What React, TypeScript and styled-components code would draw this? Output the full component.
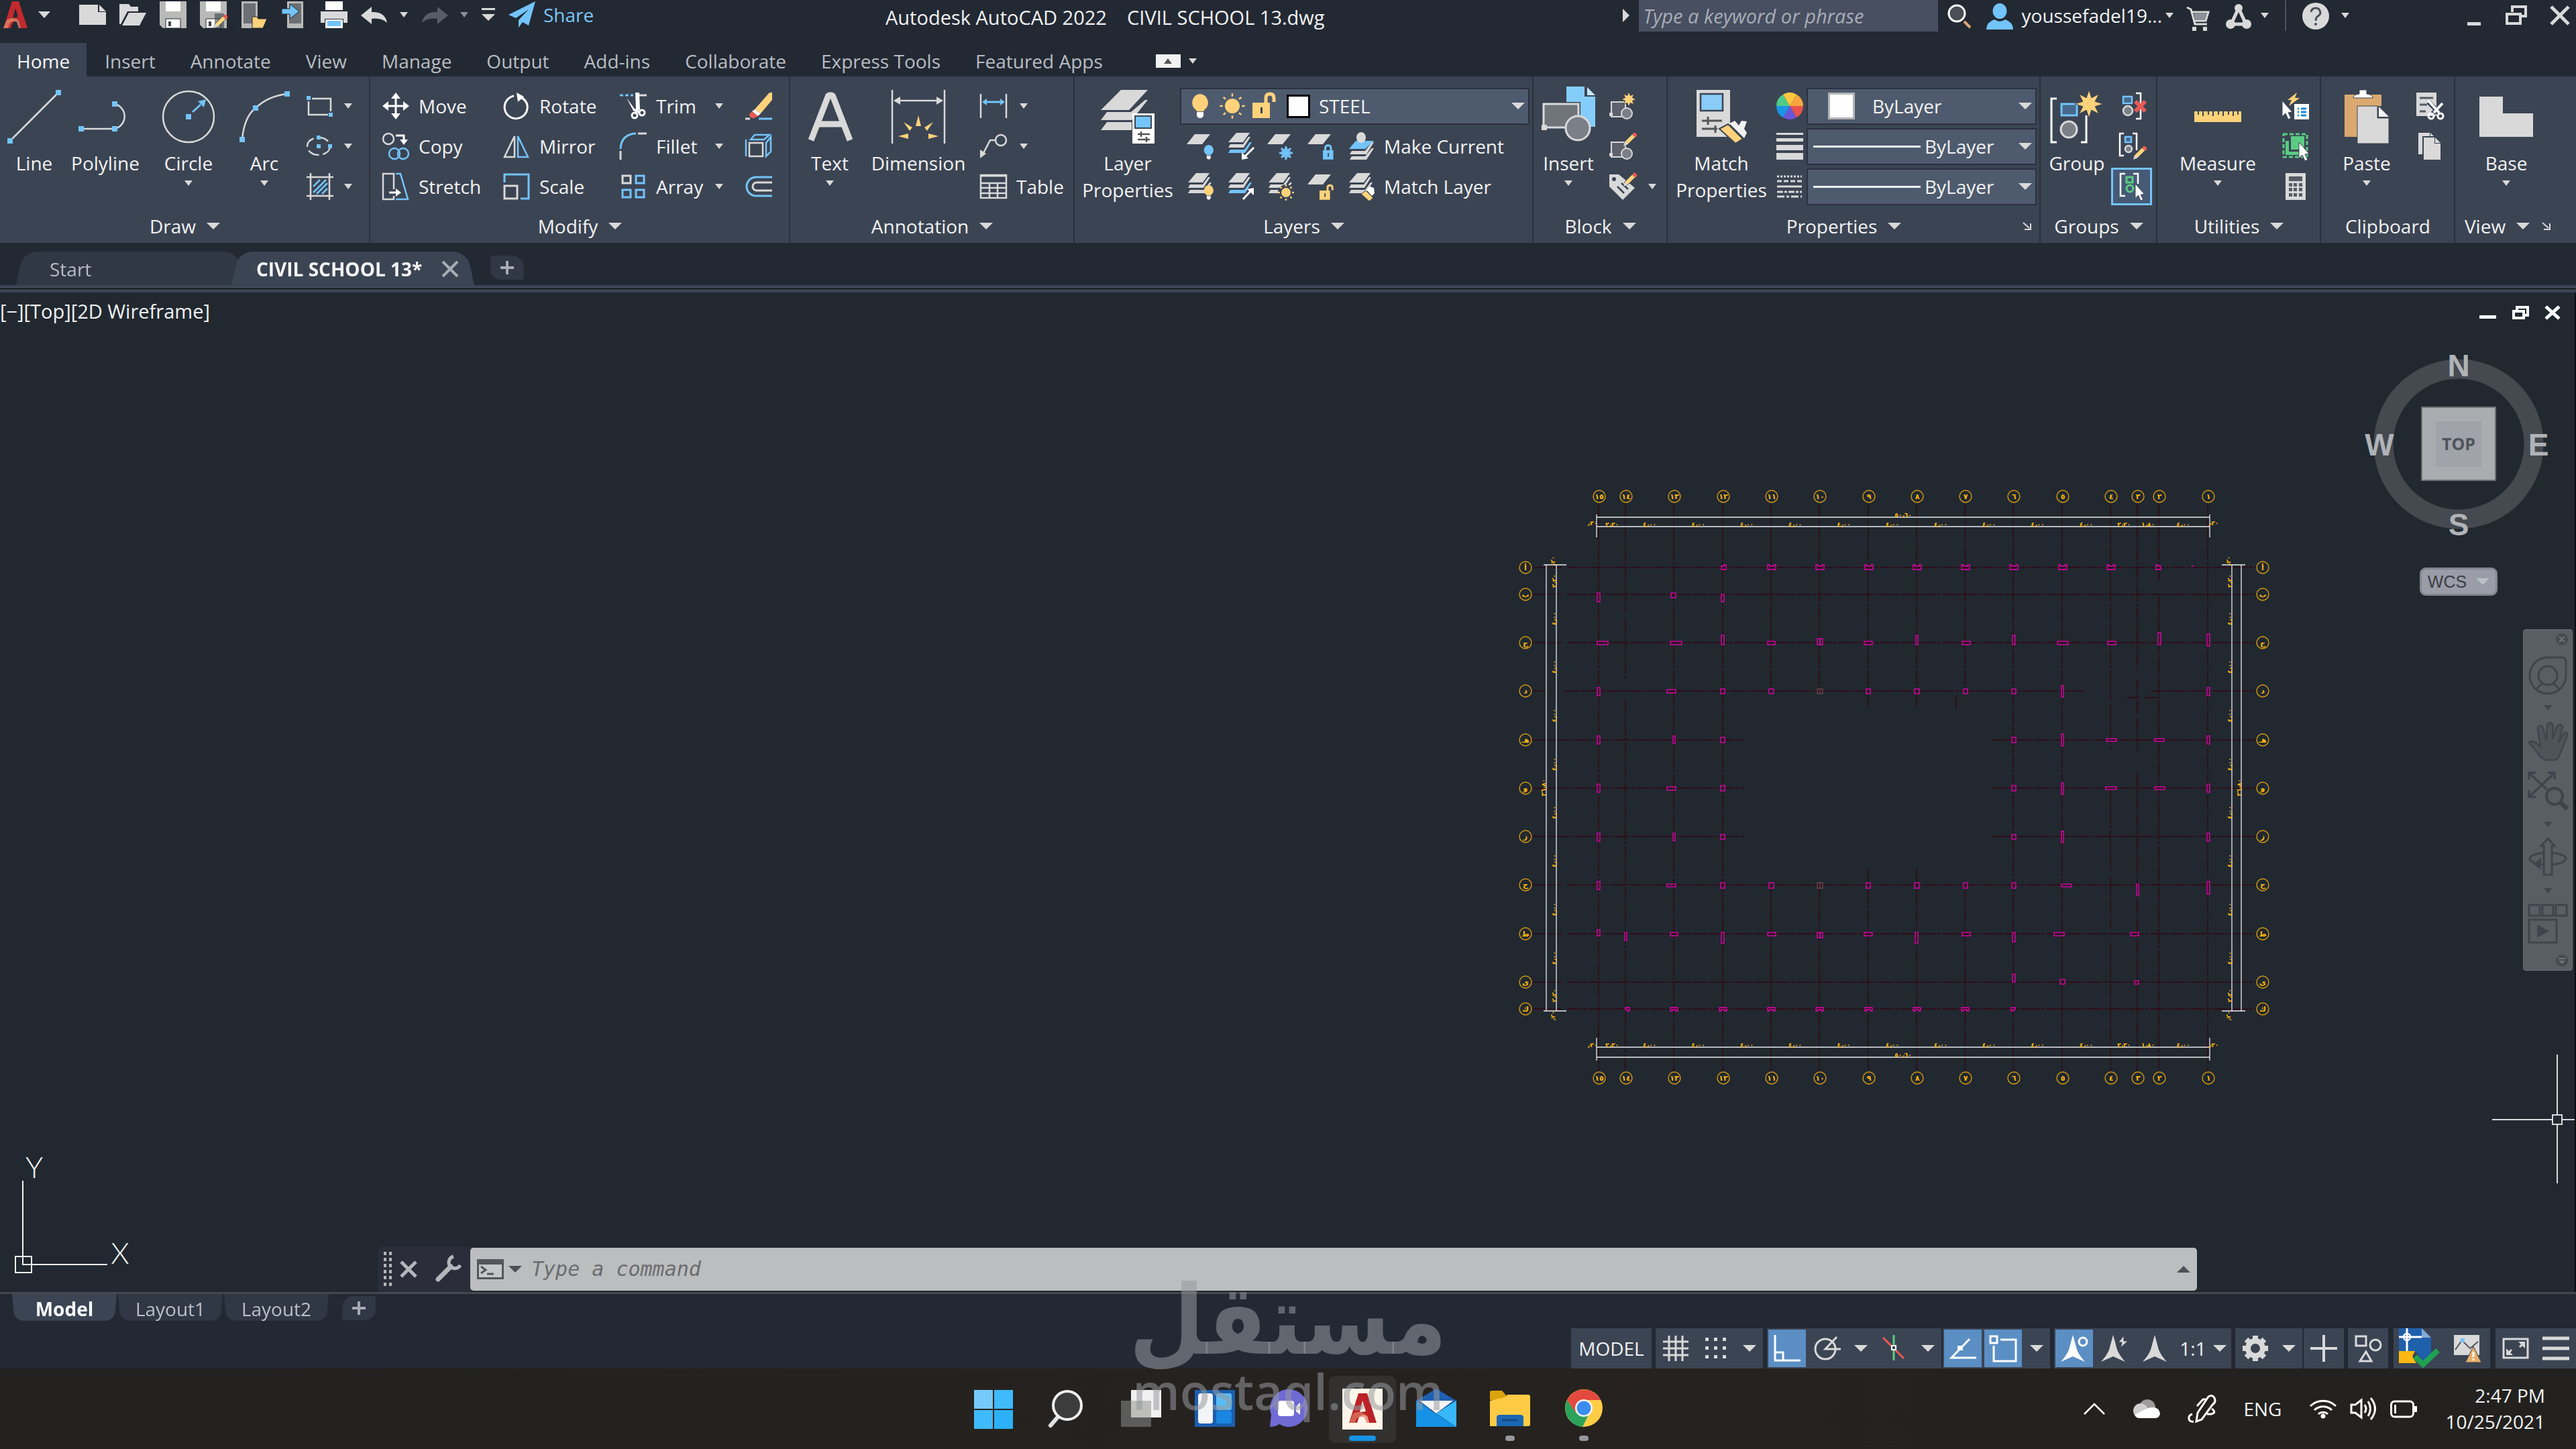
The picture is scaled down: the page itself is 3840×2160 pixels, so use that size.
import React from 'react';
import styled, { createGlobalStyle } from 'styled-components';

const G = '#d9d9d9';
const W = '#ffffff';
const B = '#73c4fa';
const Y = '#ffd27a';
const R = '#e95a53';
const GN = '#5bcb84';
const D = '#3b4453';
const M = '#7b7f87';
const UI = "'Open Sans', 'Noto Sans', sans-serif";

const Global = createGlobalStyle`
  * { box-sizing: border-box; }
  body { margin: 0; background: #222933; color: #f2f2f2; font: 28px/40px ${UI}; }
  button, input, select { font: inherit; color: inherit; background: none; border: 0; padding: 0; margin: 0; }
  button { display: block; cursor: pointer; }
`;

/* ---------- shared parts ---------- */

const Page = styled.div`
  min-height: 100vh;
  display: flex;
  flex-direction: column;
  position: relative;
  overflow: hidden;
`;

const Svg = styled.svg`
  display: block;
  flex: none;
  overflow: visible;
`;

type PicProps = { w?: number; h?: number; children: React.ReactNode };
const Pic = ({ w = 40, h = w, children }: PicProps) => (
  <Svg width={w} height={h} viewBox={`0 0 ${w} ${h}`} fill="none" aria-hidden="true">
    {children}
  </Svg>
);

const Caret = ({ big, color = G, up }: { big?: boolean; color?: string; up?: boolean }) => (
  <Pic w={big ? 20 : 12} h={big ? 10 : 8}>
    <path fill={color} d={up ? 'M0 10H20L10 0z' : big ? 'M0 0H20L10 10z' : 'M0 0H12L6 8z'} />
  </Pic>
);

const Star = ({ cx, cy, r, q }: { cx: number; cy: number; r: number; q: number }) => {
  const pts = Array.from({ length: 16 }, (_, i) => {
    const a = (i * Math.PI) / 8 - Math.PI / 2;
    const d = i % 2 ? q : r;
    return `${(cx + d * Math.cos(a)).toFixed(1)},${(cy + d * Math.sin(a)).toFixed(1)}`;
  });
  return <polygon points={pts.join(' ')} fill={Y} stroke={D} strokeWidth={1} />;
};

const Cursor = ({ x, y, s = 1 }: { x: number; y: number; s?: number }) => (
  <path transform={`translate(${x} ${y}) scale(${s})`} fill={W} stroke={D} strokeWidth={1} d="M0 0L0 24L5 19L9 28L13 26L9 18L15 17z" />
);

const Pencil = ({ x, y }: { x: number; y: number }) => (
  <g transform={`translate(${x} ${y})`}>
    <path d="M1 20L3 13L14 2L19 6L8 17z" fill={Y} stroke={D} />
    <path d="M1 20L3 13L8 17z" fill={G} />
    <path d="M14 2Q17 -2 20 1T19 7z" fill={R} />
  </g>
);

const Bulb = ({ x, y, c, s = 1 }: { x: number; y: number; c: string; s?: number }) => (
  <g transform={`translate(${x} ${y}) scale(${s})`}>
    <path d="M13 0A13 13 0 0 1 20 23Q18 25 18 26H8Q8 25 6 23A13 13 0 0 1 13 0z" fill={c} />
    <path d="M8 27H18V33L15 36H11L8 33z" fill={W} />
  </g>
);

const Sun = ({ x, y, r }: { x: number; y: number; r: number }) => (
  <g>
    <circle cx={x} cy={y} r={r} fill={Y} />
    {Array.from({ length: 8 }, (_, i) => (
      <path key={i} stroke={Y} strokeWidth={2.5} transform={`rotate(${i * 45} ${x} ${y})`} d={`M${x} ${y - r * 1.3}V${y - r * 1.7}`} />
    ))}
  </g>
);

const Lock = ({ x, y, c, s = 1, open }: { x: number; y: number; c: string; s?: number; open?: boolean }) => (
  <g transform={`translate(${x} ${y}) scale(${s})`}>
    <path fill="none" stroke={c} strokeWidth={5} d={open ? 'M20 16V8Q20 2 26 2T32 8V14' : 'M6 16V10Q6 3 13 3T20 10V16'} />
    <path d="M0 15H26V38H0z" fill={c} />
    <path d="M12 22H15V31H12z" fill={D} />
  </g>
);

const Sheet = ({ y, c = G, x = 0 }: { y: number; c?: string; x?: number }) => (
  <path fill={c} d={`M${x + 12} ${y}H${x + 35}L${x + 23} ${y + 15}H${x}z`} />
);

const Stack = ({ c3 = G }: { c3?: string }) => (
  <>
    <path fill={G} d="M14 0H34L24 14H2z" />
    <path fill={G} d="M2 22L5 17H24L32 6H35L25 22z" />
    <path fill={c3} d="M2 30L5 25H26L34 14H37L27 30z" />
  </>
);

/* ---------- title bar ---------- */

const TitleBar = styled.header`
  height: 64px;
  padding: 0 10px 0 4px;
  display: grid;
  grid-template-columns: 1316px 1fr auto;
  align-items: start;
`;
const QuickAccess = styled.div`
  display: flex;
  align-items: center;
  height: 44px;
  gap: 20px;
`;
const Pair = styled.span<{ $gap?: number }>`
  display: flex;
  align-items: center;
  gap: ${(p) => p.$gap ?? 18}px;
`;
const IconButton = styled.button<{ $pull?: number }>`
  flex: none;
  margin-left: ${(p) => p.$pull ?? 0}px;
`;
const Share = styled.button`
  display: flex;
  align-items: center;
  gap: 12px;
  color: #7cc6f7;
  height: 50px;
`;
const Title = styled.h1`
  margin: 0;
  font: 400 29px/52px ${UI};
  white-space: pre;
`;
const TitleRight = styled.div`
  display: flex;
  justify-content: flex-end;
  align-items: center;
  height: 46px;
`;
const Search = styled.input`
  width: 446px;
  height: 47px;
  padding: 0 7px;
  margin: 0 14px;
  background: #474f61;
  font: italic 29px/40px ${UI};
  &::placeholder { color: #a9adb5; opacity: 1; }
`;
const User = styled.button`
  display: flex;
  align-items: center;
  gap: 13px;
  margin-left: 22px;
`;
const Divider = styled.span`
  width: 2px;
  height: 45px;
  background: #4a5266;
`;
const TitleTools = styled.div`
  display: flex;
  align-items: center;
  gap: 24px;
  margin-left: 20px;
  margin-right: 176px;
`;
const WindowButtons = styled.div<{ $gap: number }>`
  display: flex;
  align-items: center;
  gap: ${(p) => p.$gap}px;
`;

const LogoA = () => (
  <>
    <path fill="#c22a2e" d="M14 2H24L37 42H27L24 30Q18 28 14 36L12 42H1z" />
    <path fill="#222933" d="M19 12L23 25L15 27z" />
    <path fill="#e2876a" d="M1 42L6 30Q14 24 24 30L27 42H24L21 33Q14 30 10 36L8 42z" opacity=".8" />
  </>
);
const Floppy = () => (
  <>
    <path fill="#b9bab8" d="M0 2H40V42H5L0 37z" />
    <path fill={W} d="M9 2H31V17H9z" />
    <path fill="#fff" d="M9 28H31V42H9z" stroke="#222933" />
    <path fill="#444" d="M13 32H17V39H13z" />
  </>
);

const quick: [string, React.ReactNode][] = [
  ['New', <path fill={G} d="M0 7H28V18H40V37H0zM30 7L40 17H30z" />],
  ['Open', <path fill={G} d="M0 6H14L17 10H28V17H12L2 36H0zM14 19H40L30 38H4z" />],
  ['Save', <Floppy />],
  ['Save As', <><Floppy /><path d="M22 20H36V44H22z" fill="#222933" opacity=".5" /><Pencil x={20} y={22} /></>],
  ['Open from Mobile', <><path fill="#b9bab8" d="M2 2H26V42H2z" /><path fill="#6c7075" d="M5 5H23V35H5z" /><path fill={Y} stroke="#222933" d="M18 25H25L27 28H40L34 42H18z" /></>],
  ['Save to Mobile', <><path fill="#b9bab8" d="M10 2H34V42H10z" /><path fill="#6c7075" d="M13 5H31V35H13z" /><path fill={B} stroke="#222933" d="M2 13H14V6L28 17L14 28V21H2z" /></>],
  ['Plot', <><path fill={W} d="M7 2H33V15H7z" /><path fill={G} d="M0 17H40V34H34V28H6V34H0z" /><path fill={W} d="M7 29H33V42H7z" /><path fill={B} d="M10 31H30V39H10z" /></>],
];

const TopBar = () => (
  <TitleBar>
    <QuickAccess>
      <IconButton aria-label="Application menu">
        <Pair $gap={13}>
          <Pic h={44}><LogoA /></Pic>
          <Pic w={18} h={10}><path fill={G} d="M0 0H18L9 10z" /></Pic>
        </Pair>
      </IconButton>
      <IconButton $pull={23} aria-label={quick[0][0]}><Pic h={44}>{quick[0][1]}</Pic></IconButton>
      {quick.slice(1).map(([name, art]) => (
        <IconButton key={name} aria-label={name}><Pic h={44}>{art}</Pic></IconButton>
      ))}
      <IconButton aria-label="Undo">
        <Pair><Pic><path fill={G} d="M16 8V16Q36 15 39 32Q30 24 16 26V34L0 21z" /></Pic><Caret /></Pair>
      </IconButton>
      <IconButton aria-label="Redo">
        <Pair><Pic><path fill="#575c65" d="M24 8V16Q4 15 1 32Q10 24 24 26V34L40 21z" /></Pic><Caret color="#8b8f96" /></Pair>
      </IconButton>
      <IconButton aria-label="Customize Quick Access Toolbar">
        <Pic w={20} h={20}><path fill={G} d="M0 0H20V3H0zM0 9H20L10 19z" /></Pic>
      </IconButton>
      <Share>
        <Pic><path fill={B} d="M40 0L0 20L11 25L30 12L15 28V39L21 31L30 36z" /></Pic>
        Share
      </Share>
    </QuickAccess>
    <Title>{'Autodesk AutoCAD 2022    CIVIL SCHOOL 13.dwg'}</Title>
    <TitleRight>
      <Pic w={10} h={20}><path fill={G} d="M0 0L10 10L0 20z" /></Pic>
      <Search aria-label="Search" placeholder="Type a keyword or phrase" />
      <IconButton aria-label="Find">
        <Pic w={36} h={40}>
          <circle cx="14" cy="17" r="12" fill="#4a4e57" stroke={W} strokeWidth="3" />
          <path stroke="#d9a673" strokeWidth="4" d="M25 29L34 38" />
        </Pic>
      </IconButton>
      <User>
        <Pic><path fill={B} d="M20 2A10 11 0 0 1 20 25A10 11 0 0 1 20 2zM0 41Q0 30 12 26Q20 32 28 26Q40 30 40 41z" /></Pic>
        <Pair $gap={5}>youssefadel19...<Caret /></Pair>
      </User>
      <TitleTools>
        <Pic w={34}>
          <path stroke={G} strokeWidth="3" d="M0 5L6 8L12 30H30M8 12H32L28 25H11" />
          <path fill="#8d9098" d="M10 14H30L27 24H12z" />
          <path fill={G} d="M8 34h6v6h-6zM24 34h6v6h-6z" />
        </Pic>
        <Pair $gap={14}>
          <Pic w={38}>
            <path stroke={G} strokeWidth="5" d="M19 8L8 32H30z" />
            <circle cx="19" cy="8" r="6" fill={G} /><circle cx="7" cy="32" r="7" fill={G} /><circle cx="31" cy="32" r="7" fill={G} />
          </Pic>
          <Caret />
        </Pair>
        <Divider />
        <Pair>
          <Pic>
            <circle cx="20" cy="21" r="20" fill={G} />
            <path stroke="#4a4e57" strokeWidth="3" d="M13 15Q14 9 20 9T27 16Q27 19 22 22Q20 24 20 28" />
            <circle cx="20" cy="33" r="2" fill="#4a4e57" />
          </Pic>
          <Caret />
        </Pair>
      </TitleTools>
      <WindowButtons $gap={35}>
        <IconButton aria-label="Minimize"><Pic w={22} h={32}><path fill={G} d="M0 26H20V31H0z" /></Pic></IconButton>
        <IconButton aria-label="Restore"><Pic w={32} h={30}><path stroke={G} strokeWidth="4" d="M10 10V2H30V16H22M2 13H22V27H2z" /></Pic></IconButton>
        <IconButton aria-label="Close"><Pic w={28}><path stroke={G} strokeWidth="5" d="M1 1L27 27M27 1L1 27" /></Pic></IconButton>
      </WindowButtons>
    </TitleRight>
  </TitleBar>
);

/* ---------- ribbon tabs ---------- */

const RibbonTabs = styled.nav`
  height: 50px;
  display: flex;
  align-items: center;
`;
const RibbonTab = styled.button<{ $on?: boolean }>`
  height: 50px;
  padding: 4px 25px 0;
  background: ${(p) => (p.$on ? D : 'none')};
  color: ${(p) => (p.$on ? '#f5f5f5' : '#b9bcc2')};
  & + & { margin-left: 2px; }
`;
const Collapse = styled.button`
  display: flex;
  align-items: center;
  gap: 12px;
  margin: 4px 0 0 54px;
`;

const tabs = ['Home', 'Insert', 'Annotate', 'View', 'Manage', 'Output', 'Add-ins', 'Collaborate', 'Express Tools', 'Featured Apps'];

/* ---------- ribbon ---------- */

const Ribbon = styled.section`
  height: 248px;
  background: ${D};
  display: grid;
  grid-template-columns: 552fr 626fr 424fr 684fr 200fr 556fr 174fr 244fr 200fr 180fr;
`;
const Panel = styled.div`
  display: grid;
  grid-template-rows: 180px 54px;
  padding: 14px 0 0 1px;
  min-width: 0;
  border-right: 2px solid #2a313d;
  &:last-child { border-right: 0; }
`;
const PanelBody = styled.div`
  display: flex;
  align-items: flex-start;
`;
const PanelTitle = styled.button<{ $room?: number }>`
  display: flex;
  width: 100%;
  align-items: center;
  justify-content: center;
  gap: 16px;
  height: 54px;
  padding: 4px ${(p) => p.$room ?? 0}px 0 0;
`;
const Launcher = styled.button<{ $right: number }>`
  position: absolute;
  top: 23px;
  right: ${(p) => p.$right}px;
`;
const TitleRow = styled.div`
  position: relative;
  display: flex;
  align-items: center;
`;
const Big = styled.button<{ $w: number }>`
  width: ${(p) => p.$w}px;
  flex: none;
  display: flex;
  flex-direction: column;
  align-items: center;
  padding-top: 6px;
  text-align: center;
  white-space: pre-line;
  & > svg { margin-bottom: 9px; }
  & > svg:last-child:not(:first-child) { margin: 6px 0 0; }
`;
const Column = styled.div<{ $ml?: number; $grow?: boolean }>`
  display: grid;
  grid-auto-rows: 60px;
  align-items: center;
  margin-left: ${(p) => p.$ml ?? 0}px;
  flex: ${(p) => (p.$grow ? '1' : 'none')};
  min-width: 0;
`;
const Small = styled.button<{ $gap?: number }>`
  display: flex;
  align-items: center;
  gap: ${(p) => p.$gap ?? 14}px;
  height: 56px;
  white-space: nowrap;
`;
const SmallLabel = styled.span`
  flex: 1;
  text-align: left;
`;
const ModifyGrid = styled.div`
  display: grid;
  grid-template-columns: 180px 174px 187px 40px;
  grid-auto-rows: 60px;
  align-items: center;
  padding-left: 17px;
`;
const ArrowSmall = styled(Small)`
  width: 154px;
`;
const IconRow = styled.div`
  display: flex;
  align-items: center;
  gap: 20px;
  padding-left: 10px;
`;
const Toggle = styled.button`
  width: 61px;
  height: 56px;
  margin: 0 -12px;
  display: grid;
  place-items: center;
  background: #465a75;
  border: 3px solid ${B};
`;
const Combo = styled.label<{ $pad?: number }>`
  display: flex;
  align-items: center;
  height: 55px;
  margin-right: 4px;
  padding: 0 5px 0 ${(p) => p.$pad ?? 8}px;
  background: #4e5b6e;
  border: 2px solid #2c3040;
`;
const Select = styled.select<{ $ml: number }>`
  appearance: none;
  flex: 1;
  min-width: 0;
  margin-left: ${(p) => p.$ml}px;
  outline: 0;
`;
const Swatch = styled.span<{ $w: number; $edge: string; $ml?: number }>`
  width: ${(p) => p.$w}px;
  height: ${(p) => p.$w}px;
  margin-left: ${(p) => p.$ml ?? 0}px;
  flex: none;
  background: #fff;
  border: 3px solid ${(p) => p.$edge};
`;
const LineSample = styled.span`
  width: 160px;
  height: 3px;
  flex: none;
  background: #f2f2f2;
`;

const Sq = ({ x, y, s = 6 }: { x: number; y: number; s?: number }) => <rect x={x - s / 2} y={y - s / 2} width={s} height={s} fill={B} />;

const ByLayer = ({ label, ml }: { label: string; ml: number }) => (
  <Select aria-label={label} $ml={ml} defaultValue="ByLayer"><option>ByLayer</option></Select>
);

const PanelFoot = ({ name, arrow = true, launch }: { name: string; arrow?: boolean; launch?: number }) => (
  <TitleRow>
    <PanelTitle $room={launch === undefined ? 0 : launch + 18}>{name}{arrow && <Caret big />}</PanelTitle>
    {launch !== undefined && (
      <Launcher $right={launch} aria-label={`${name} settings`}>
        <Pic w={12}><path stroke={G} strokeWidth="2" d="M0 1L9 9M11 2V11H2" /></Pic>
      </Launcher>
    )}
  </TitleRow>
);

const BlockArt = () => (
  <>
    <path d="M3 14H24V36H3z" fill="#5d626c" stroke={G} strokeWidth="2" />
    <path d="M0 30H5V35H0z" fill={G} />
    <circle cx="26" cy="31" r="8" fill={M} stroke={G} strokeWidth="2" />
  </>
);

const RibbonBar = () => (
  <Ribbon>
    <Panel>
      <PanelBody>
        <Big $w={100}>
          <Pic w={80}><path stroke={G} strokeWidth="2.5" d="M4 76L76 4" /><Sq x={4} y={76} s={8} /><Sq x={76} y={4} s={8} /></Pic>
          Line
        </Big>
        <Big $w={112}>
          <Pic w={80}>
            <path stroke={G} strokeWidth="2.5" d="M4 58H54A19 19 0 0 0 54 21" />
            <Sq x={4} y={58} s={8} /><Sq x={54} y={58} s={8} /><Sq x={54} y={21} s={8} />
          </Pic>
          Polyline
        </Big>
        <Big $w={136}>
          <Pic w={80}>
            <circle cx="40" cy="40" r="38" stroke={G} strokeWidth="2.5" />
            <path stroke={B} strokeWidth="3" d="M46 33L58 22" /><path fill={B} d="M66 14L63 26L54 17z" /><Sq x={40} y={40} s={8} />
          </Pic>
          Circle<Caret />
        </Big>
        <Big $w={90}>
          <Pic w={80}>
            <path stroke={G} strokeWidth="2.5" d="M7 74Q10 40 27 27Q46 9 74 6" />
            <Sq x={7} y={74} s={8} /><Sq x={27} y={27} s={8} /><Sq x={74} y={6} s={8} />
          </Pic>
          Arc<Caret />
        </Big>
        <Column $ml={18}>
          <Small $gap={16} aria-label="Rectangle">
            <Pic><path stroke={G} strokeWidth="2.5" d="M8 9H36V28M32 33H3V13" /><Sq x={3} y={8} /><Sq x={36} y={33} /></Pic><Caret />
          </Small>
          <Small $gap={16} aria-label="Ellipse">
            <Pic><ellipse cx="18" cy="20" rx="17" ry="13" stroke={G} strokeWidth="2.5" strokeDasharray="17 6" /><Sq x={18} y={20} /><Sq x={18} y={7} /><Sq x={35} y={20} /></Pic><Caret />
          </Small>
          <Small $gap={16} aria-label="Hatch">
            <Pic>
              <path stroke={G} strokeWidth="2.5" d="M0 6H40M0 34H40M6 0V40M34 0V40" />
              <path stroke={B} strokeWidth="2.5" d="M10 20L20 10M10 29L29 10M15 31L31 15M23 31L31 23" />
            </Pic><Caret />
          </Small>
        </Column>
      </PanelBody>
      <PanelFoot name="Draw" />
    </Panel>

    <Panel>
      <ModifyGrid>
        <Small><Pic><path stroke={W} strokeWidth="3" d="M20 6V34M6 20H34" /><path fill={W} d="M20 0L27 9H13zM20 40L27 31H13zM0 20L9 13V27zM40 20L31 13V27z" /></Pic>Move</Small>
        <Small><Pic><path stroke={W} strokeWidth="3" d="M24 6Q38 12 36 24A17 17 0 1 1 16 5" /><path fill={W} d="M20 0L31 6L22 14z" /></Pic>Rotate</Small>
        <ArrowSmall>
          <Pic>
            <path stroke={B} strokeWidth="3" strokeDasharray="5 3" d="M0 4H20" /><path stroke={G} strokeWidth="3" d="M24 4H40" />
            <path fill={W} d="M10 8L22 24L31 28L28 31L20 27zM23 0H29L30 26L24 26z" />
            <circle cx="22" cy="34" r="4" stroke={W} strokeWidth="3" /><circle cx="33" cy="30" r="4" stroke={W} strokeWidth="3" />
          </Pic>
          <SmallLabel>Trim</SmallLabel><Caret />
        </ArrowSmall>
        <Small aria-label="Erase">
          <Pic><path fill={Y} d="M14 25L36 0H40V11L23 31z" /><path fill={W} d="M14 25L23 31L19 35L10 28z" /><path fill={R} d="M10 28L19 35Q13 40 8 37T10 28z" /><path stroke={B} strokeWidth="3" d="M20 39H40" /><path stroke={G} strokeWidth="3" d="M0 39H7" /></Pic>
        </Small>
        <Small><Pic><circle cx="9" cy="9" r="8" stroke={G} strokeWidth="2.5" /><path stroke={W} strokeWidth="3" d="M20 4H32V12" /><path fill={W} d="M26 10H38L32 18z" /><circle cx="18" cy="31" r="8" stroke={B} strokeWidth="2.5" /><circle cx="31" cy="31" r="8" stroke={B} strokeWidth="2.5" /></Pic>Copy</Small>
        <Small><Pic><path stroke={G} strokeWidth="2.5" d="M17 5V36H2z" /><path stroke={B} strokeWidth="2.5" d="M22 5V36H37z" /></Pic>Mirror</Small>
        <ArrowSmall>
          <Pic><path stroke={B} strokeWidth="3" d="M1 24Q2 2 24 1" /><path stroke={G} strokeWidth="3" d="M27 1H40M1 27V40" /></Pic>
          <SmallLabel>Fillet</SmallLabel><Caret />
        </ArrowSmall>
        <Small aria-label="Explode">
          <Pic><path stroke={B} strokeWidth="2.5" d="M1 10V35M8 10L14 3H36L28 10zM31 15L38 6V28L31 35z" /><path stroke={G} strokeWidth="2.5" d="M6 15H26V35H6z" /></Pic>
        </Small>
        <Small><Pic><path stroke={G} strokeWidth="2.5" d="M17 24V1H1V39H17V34" /><path stroke={B} strokeWidth="2.5" d="M20 1H27L38 39H20" /><path stroke={W} strokeWidth="3" d="M10 29H22" /><path fill={W} d="M20 23L28 29L20 35z" /></Pic>Stretch</Small>
        <Small><Pic><path stroke={B} strokeWidth="3" d="M2 14V2H38V38H26" /><path stroke={G} strokeWidth="3" d="M2 19H21V38H2z" /></Pic>Scale</Small>
        <ArrowSmall>
          <Pic><path stroke={G} strokeWidth="3" d="M4 4H16V15H4z" /><path stroke={B} strokeWidth="3" d="M24 4H36V15H24zM4 25H16V36H4zM24 25H36V36H24z" /></Pic>
          <SmallLabel>Array</SmallLabel><Caret />
        </ArrowSmall>
        <Small aria-label="Offset">
          <Pic><path stroke={B} strokeWidth="3" d="M40 6H16A14 14 0 0 0 16 34H40" /><path stroke={G} strokeWidth="3" d="M40 14H17A6 6 0 0 0 17 26H40" /></Pic>
        </Small>
      </ModifyGrid>
      <PanelFoot name="Modify" />
    </Panel>

    <Panel>
      <PanelBody>
        <Big $w={116}>
          <Pic w={80}><path stroke={G} strokeWidth="9" strokeLinejoin="bevel" d="M12 75L38 8H44L70 75M21 51H61" /></Pic>
          Text<Caret />
        </Big>
        <Big $w={148}>
          <Pic w={80}>
            <path stroke={G} strokeWidth="2.5" d="M1 0V80M79 0V80M6 16H74" /><path fill={G} d="M3 16L13 10V22zM77 16L67 10V22z" />
            <path fill={Y} d="M40 38L44 54H36zM18 48L31 56L27 61zM62 48L49 56L53 61zM10 69L25 65V73zM70 69L55 65V73z" />
          </Pic>
          Dimension
        </Big>
        <Column $ml={18}>
          <Small $gap={19} aria-label="Linear"><Pic><path stroke={G} strokeWidth="2.5" d="M1 2V38M39 2V38" /><path stroke={B} strokeWidth="3" d="M6 14H34" /><path fill={B} d="M3 14L10 9V19zM37 14L30 9V19z" /></Pic><Caret /></Small>
          <Small $gap={19} aria-label="Leader"><Pic><circle cx="31" cy="11" r="8" stroke={G} strokeWidth="2.5" /><path stroke={G} strokeWidth="2.5" d="M23 11H15L5 30" /><path fill={G} d="M0 38V25L9 31z" /></Pic><Caret /></Small>
          <Small><Pic><path stroke={G} strokeWidth="2.5" d="M1 3H39V37H1zM1 15H39M1 22H39M1 30H39M14 15V37M26 15V37" /><path stroke={G} strokeWidth="3" d="M1 4H39" /></Pic>Table</Small>
        </Column>
      </PanelBody>
      <PanelFoot name="Annotation" />
    </Panel>

    <Panel>
      <PanelBody>
        <Big $w={156}>
          <Pic w={80}>
            <path fill={G} d="M30 0H70L42 30H0zM0 45L9 33H45L66 15H70L46 45zM0 60L9 48H46V60z" />
            <path fill={W} d="M47 35H80V80H47z" /><path fill={B} stroke={D} strokeWidth="2" d="M51 39H75V57H51z" />
            <path stroke="#555" strokeWidth="2.5" d="M55 66H73M55 74H73M60 62V70M68 70V78" />
          </Pic>
          {'Layer\nProperties'}
        </Big>
        <Column $grow>
          <Combo $pad={14}>
            <Pic w={128} h={40}><Bulb x={1} y={2} c={Y} /><Sun x={62} y={20} r={11} /><Lock x={92} y={0} c={Y} open /></Pic>
            <Swatch $w={35} $ml={15} $edge="#000" />
            <Select aria-label="Layer" $ml={13} defaultValue="STEEL"><option>STEEL</option></Select>
            <Caret big />
          </Combo>
          <IconRow>
            <Pic><Sheet y={2} /><Bulb x={25} y={18} c={B} s={0.6} /></Pic>
            <Pic><Stack c3={B} /><path stroke={W} strokeWidth="3" d="M40 22L26 36" /><path fill={W} d="M22 40V29L32 38z" /></Pic>
            <Pic><Sheet y={2} /><g stroke={B} strokeWidth="3"><path d="M28 20V40M18 30H38M21 23L35 37M35 23L21 37" /><circle cx="28" cy="30" r="6" strokeWidth="2" /></g></Pic>
            <Pic><Sheet y={2} /><Lock x={23} y={17} c={B} s={0.6} /></Pic>
            <Small><Pic><path fill={G} d="M3 32L6 27H26L36 14H39L28 32zM3 40L6 35H26L36 23H39L28 40z" /><path fill={B} d="M2 24L12 12H39L26 24z" /><ellipse cx="20" cy="7" rx="7" ry="8" fill={G} /></Pic>Make Current</Small>
          </IconRow>
          <IconRow>
            <Pic><Stack /><Bulb x={25} y={18} c={Y} s={0.6} /></Pic>
            <Pic><Stack c3={B} /><path stroke={W} strokeWidth="3" d="M24 39L36 26" /><path fill={W} d="M40 22V33L30 24z" /></Pic>
            <Pic><Stack /><circle cx="28" cy="29" r="12" fill={D} /><Sun x={28} y={29} r={7} /></Pic>
            <Pic><Sheet y={2} /><Lock x={18} y={17} c={Y} s={0.6} open /></Pic>
            <Small><Pic><Stack /><path fill={Y} stroke={D} d="M20 31L27 26L38 37L32 42z" /><path fill={W} d="M28 25L33 20L39 22L40 30L36 34z" /></Pic>Match Layer</Small>
          </IconRow>
        </Column>
      </PanelBody>
      <PanelFoot name="Layers" />
    </Panel>

    <Panel>
      <PanelBody>
        <Big $w={102}>
          <Pic w={80}>
            <path fill="#84cdfa" d="M37 -5H64V10H80V55H58V18H37z" /><path fill="#c6e8fb" d="M68 -4L80 8H68z" />
            <path fill="#70747b" stroke={G} strokeWidth="3" d="M3 21H55V56H3z" /><path fill={G} d="M0 52H8V60H0z" />
            <circle cx="54" cy="57" r="18" fill={M} stroke={G} strokeWidth="3" />
          </Pic>
          Insert<Caret />
        </Big>
        <Column $ml={10}>
          <Small aria-label="Create Block"><Pic><BlockArt /><Star cx={29} cy={10} r={11} q={6} /></Pic></Small>
          <Small aria-label="Edit Block"><Pic><BlockArt /><Pencil x={20} y={0} /></Pic></Small>
          <Small $gap={18} aria-label="Edit Attributes"><Pic><path fill={G} d="M0 2H14L38 22L20 40L0 20z" /><circle cx="7" cy="9" r="3" fill={D} /><path stroke={D} strokeWidth="2.5" d="M12 20L22 30M18 15L28 24" /><Pencil x={20} y={0} /></Pic><Caret /></Small>
        </Column>
      </PanelBody>
      <PanelFoot name="Block" />
    </Panel>

    <Panel>
      <PanelBody>
        <Big $w={158}>
          <Pic w={80}>
            <path fill={G} d="M3 0H53V70H3z" /><path fill="#8accf7" stroke={D} strokeWidth="2.5" d="M9 6H42V31H9z" />
            <path stroke="#555" strokeWidth="3" d="M11 46H41M11 58H34M20 40V52M31 53V64" />
            <path fill={Y} stroke={D} strokeWidth="2" d="M37 58L50 51L72 73L61 80z" /><path fill="#f1f1f1" d="M52 50L60 46L66 53L70 46L78 47L74 58L78 64L74 72z" />
          </Pic>
          {'Match\nProperties'}
        </Big>
        <Column $ml={3}>
          <Pic>
            {['#f7a63f', '#e9534e', '#6b56d8', '#1997e5', '#4ecb87', '#ffc83e'].map((c, i) => (
              <path key={c} fill={c} transform={`rotate(${i * 60} 20 20)`} d="M20 20L30 2.7A20 20 0 0 1 40 20z" />
            ))}
          </Pic>
          <Pic><path fill={G} d="M0 0H40V3H0zM0 8H40V13H0zM0 18H40V26H0zM0 30H40V40H0z" /></Pic>
          <Pic><g stroke={G} strokeWidth="3"><path strokeDasharray="3 2" d="M1 5H38" /><path strokeDasharray="7 3" d="M1 12H38" /><path d="M1 20H38" /><path strokeDasharray="9 2 4 2" d="M1 28H38" /><path strokeDasharray="11 3 4 3" d="M1 35H38" /></g></Pic>
        </Column>
        <Column $ml={5} $grow>
          <Combo $pad={30}><Swatch $w={40} $edge="#b4b4b4" /><ByLayer label="Object color" ml={26} /><Caret big /></Combo>
          <Combo><LineSample /><ByLayer label="Lineweight" ml={6} /><Caret big /></Combo>
          <Combo><LineSample /><ByLayer label="Linetype" ml={6} /><Caret big /></Combo>
        </Column>
      </PanelBody>
      <PanelFoot name="Properties" launch={12} />
    </Panel>

    <Panel>
      <PanelBody>
        <Big $w={106}>
          <Pic w={80}>
            <path stroke={W} strokeWidth="3" d="M10 13H2V78H10M46 78H54V38" /><path fill="#47698b" stroke={B} strokeWidth="3" d="M17 21H40V38H17z" />
            <circle cx="28" cy="59" r="12" fill={M} stroke={G} strokeWidth="3" /><Star cx={58} cy={21} r={21} q={10} />
          </Pic>
          Group
        </Big>
        <Column $ml={10}>
          <Small aria-label="Ungroup"><Pic><path stroke={W} strokeWidth="2.5" d="M25 1H32V39H25" /><path fill="#47698b" stroke={B} strokeWidth="2.5" d="M6 6H19V16H6z" /><circle cx="13" cy="27" r="7" fill={M} stroke={G} strokeWidth="2.5" /><path stroke={R} strokeWidth="6" d="M24 13L39 28M39 13L24 28" /></Pic></Small>
          <Small aria-label="Group Edit"><Pic><path stroke={W} strokeWidth="2.5" d="M7 1H1V34H7M20 1H26V26" /><path fill="#47698b" stroke={B} strokeWidth="2.5" d="M9 6H18V14H9z" /><circle cx="14" cy="24" r="5" fill={M} stroke={G} strokeWidth="2.5" /><Pencil x={20} y={20} /></Pic></Small>
          <Toggle aria-label="Group Selection On/Off"><Pic><path stroke={W} strokeWidth="2.5" d="M10 1H3V34H10M22 1H29V16" /><path stroke={GN} strokeWidth="3" d="M12 6H21V14H12z" /><circle cx="17" cy="23" r="5" stroke={GN} strokeWidth="3" /><Cursor x={25} y={16} s={0.9} /></Pic></Toggle>
        </Column>
      </PanelBody>
      <PanelFoot name="Groups" />
    </Panel>

    <Panel>
      <PanelBody>
        <Big $w={178}>
          <Pic w={80}><path fill={Y} d="M5 32H75V48H5z" /><path stroke={D} strokeWidth="2" d="M11 32V37M18 32V39M26 32V37M33 32V39M41 32V37M48 32V39M56 32V37M63 32V39M70 32V37" /></Pic>
          Measure<Caret />
        </Big>
        <Column $ml={7}>
          <Small aria-label="Quick Select"><Pic><path fill={Y} d="M22 0L8 11H14L10 20L26 8H19z" /><path fill={W} d="M18 17H40V40H18z" /><path stroke="#1b87d6" strokeWidth="3" d="M23 24H25M28 24H36M23 29H25M28 29H36M23 34H25M28 34H36" /><Cursor x={0} y={12} /></Pic></Small>
          <Small aria-label="Select All"><Pic><path stroke={GN} strokeWidth="3" strokeDasharray="6 3" d="M2 2H37V36H2z" /><path fill={GN} d="M13 5H33V25H13zM5 12H10V28H30V33H5z" /><Cursor x={25} y={14} /></Pic></Small>
          <Small aria-label="Quick Calculator"><Pic><path fill={G} d="M5 0H35V40H5z" /><path fill="#565b64" d="M10 5H30V12H10z" /><g fill="#565b64">{[15, 22, 30].map((y) => [10, 17, 25].map((x) => <rect key={x + y * 50} x={x} y={y} width="5" height="5" />))}</g></Pic></Small>
        </Column>
      </PanelBody>
      <PanelFoot name="Utilities" />
    </Panel>

    <Panel>
      <PanelBody>
        <Big $w={134}>
          <Pic w={80}>
            <path fill="#dba970" d="M7 7H62V24H26V70H7z" /><path fill={W} stroke={D} d="M20 12Q20 7 29 6V0H40V6Q49 7 49 12z" />
            <path fill={G} stroke={D} d="M26 24H56V42H73V80H26z" /><path fill="#f4f4f4" d="M58 25L73 40H58z" />
          </Pic>
          Paste<Caret />
        </Big>
        <Column $ml={7}>
          <Small aria-label="Cut"><Pic><path fill={G} d="M0 0H30V35H0z" /><path stroke="#565b64" strokeWidth="3" d="M5 8H25M5 18H16M5 28H14" /><path stroke={D} strokeWidth="7" d="M18 14L36 32M39 16L24 32" /><path stroke={W} strokeWidth="4" d="M18 12L34 30M39 16L26 30" /><circle cx="22" cy="35" r="4" stroke={W} strokeWidth="3" /><circle cx="36" cy="35" r="4" stroke={W} strokeWidth="3" /></Pic></Small>
          <Small aria-label="Copy Clip"><Pic><path fill={G} d="M3 0H20V5H9V32H3zM11 7H27V16H36V40H11zM28 7L36 15H28zM21 0L26 5H21z" /></Pic></Small>
        </Column>
      </PanelBody>
      <PanelFoot name="Clipboard" arrow={false} />
    </Panel>

    <Panel>
      <PanelBody>
        <Big $w={150}>
          <Pic w={80}><path fill={G} d="M0 10H35V35H80V70H0z" /></Pic>
          Base<Caret />
        </Big>
      </PanelBody>
      <PanelFoot name="View" launch={38} />
    </Panel>
  </Ribbon>
);

/* ---------- file tabs ---------- */

const FileTabs = styled.nav`
  height: 63px;
  padding: 8px 0 0 24px;
  display: flex;
  align-items: flex-end;
`;
const FileTab = styled.button<{ $on?: boolean; $w: number }>`
  position: relative;
  z-index: 0;
  width: ${(p) => p.$w}px;
  height: 55px;
  padding: 6px 24px 0 50px;
  display: flex;
  align-items: center;
  justify-content: space-between;
  white-space: nowrap;
  font-weight: ${(p) => (p.$on ? 700 : 400)};
  color: ${(p) => (p.$on ? '#f5f5f5' : '#b9bcc2')};
  & + & { margin-left: -19px; padding-left: 37px; }
  &::before {
    content: '';
    position: absolute;
    z-index: -1;
    inset: 0;
    border-radius: 22px 22px 0 0;
    transform-origin: bottom;
    transform: perspective(200px) rotateX(14deg);
    background: ${(p) => (p.$on ? D : '#303745')};
  }
`;
const AddTab = styled.button<{ $down?: boolean }>`
  width: 50px;
  height: 36px;
  margin: ${(p) => (p.$down ? '3px 0 0 20px' : '0 0 8px 24px')};
  display: grid;
  place-items: center;
  background: #303745;
  border-radius: ${(p) => (p.$down ? '18px 0 16px 4px' : '4px 18px 4px 16px')};
`;
const Rule = styled.div`
  height: 11px;
  background: ${D};
  display: flex;
  align-items: center;
  &::before { content: ''; flex: 1; height: 1px; background: #000; }
`;
const Plus = () => <Pic w={20}><path fill="#a7abb2" d="M8 0H12V8H20V12H12V20H8V12H0V8H8z" /></Pic>;

/* ---------- drawing area ---------- */

const Canvas = styled.main`
  position: relative;
  flex: 1;
  background: #212830;
  border-right: 2px solid #0b0d10;
`;
const ViewLabel = styled.div`
  padding: 8px 0 0;
  font-size: 29px;
  white-space: nowrap;
`;
const Float = styled.div<{ $r?: number; $t?: number; $l?: number; $b?: number }>`
  position: absolute;
  right: ${(p) => (p.$r === undefined ? 'auto' : `${p.$r}px`)};
  left: ${(p) => (p.$l === undefined ? 'auto' : `${p.$l}px`)};
  top: ${(p) => (p.$t === undefined ? 'auto' : `${p.$t}px`)};
  bottom: ${(p) => (p.$b === undefined ? 'auto' : `${p.$b}px`)};
`;

const colX = [2383, 2423, 2495, 2568, 2640, 2712, 2785, 2857, 2929, 3001, 3074, 3146, 3186, 3218, 3291];
const colNames = ['١٥', '١٤', '١٣', '١٢', '١١', '١٠', '٩', '٨', '٧', '٦', '٥', '٤', '٣', '٢', '١'];
const rowY = [846, 886, 958, 1030, 1103, 1175, 1247, 1319, 1392, 1464, 1504];
const rowNames = ['أ', 'ب', 'ج', 'د', 'هـ', 'و', 'ز', 'ح', 'ط', 'ى', 'ك'];

const full: number[][] = [[751, 1598]];
const mid: number[][] = [[751, 1028], [1320, 1598]];
const midLong: number[][] = [[751, 1055], [1294, 1598]];
const colRuns = [full, [[751, 912], [921, 1012], [1044, 1598]], full, full, mid, mid, midLong, midLong, mid, full, full,
  [[751, 1045], [1050, 1119], [1175, 1300], [1308, 1384], [1405, 1598]], [[751, 996], [1013, 1063], [1070, 1119], [1153, 1598]], [[751, 867], [889, 1598]], full];
const wide: number[][] = [[2284, 2328], [2337, 3363]];
const split: number[][] = [[2284, 2600], [2970, 3363]];
const rowRuns = [wide, wide, wide, [[2284, 2304], [2333, 3106], [3206, 3363]], split, split, split, wide, wide, wide, wide];

const posts: number[][] = [
  [2381, 884, 4, 13], [2491, 884, 7, 7], [2566, 886, 4, 11],
  [2381, 956, 16, 5], [2490, 956, 17, 5], [2566, 947, 4, 14], [2635, 956, 11, 5], [2709, 952, 4, 9], [2713, 952, 4, 9], [2779, 956, 12, 5], [2856, 947, 3, 14], [2925, 956, 12, 5], [3000, 947, 4, 14], [3067, 956, 16, 5], [3142, 956, 12, 5], [3217, 943, 4, 18], [3290, 945, 4, 18],
  [2381, 1025, 4, 12], [2485, 1028, 13, 5], [2565, 1027, 6, 7], [2637, 1027, 7, 7], [2782, 1027, 6, 7], [2854, 1027, 7, 7], [2927, 1027, 6, 7], [2999, 1027, 6, 7], [3073, 1022, 3, 17], [3290, 1025, 4, 12],
  [2381, 1097, 4, 12], [2494, 1097, 3, 11], [2565, 1099, 6, 8], [2999, 1099, 6, 8], [3073, 1094, 3, 18], [3140, 1101, 15, 4], [3212, 1101, 14, 4], [3290, 1097, 4, 12],
  [2381, 1169, 4, 12], [2485, 1173, 13, 5], [2565, 1171, 6, 8], [2999, 1171, 6, 8], [3073, 1167, 3, 17], [3139, 1173, 16, 4], [3212, 1173, 15, 4], [3290, 1169, 4, 12],
  [2381, 1242, 4, 12], [2494, 1242, 3, 11], [2565, 1244, 6, 7], [2999, 1244, 6, 7], [3073, 1239, 3, 17], [3290, 1242, 4, 12],
  [2381, 1314, 4, 12], [2485, 1318, 13, 4], [2565, 1316, 6, 8], [2637, 1316, 7, 8], [2782, 1316, 6, 8], [2854, 1316, 7, 8], [2927, 1316, 6, 8], [2999, 1316, 6, 8], [3073, 1318, 15, 4], [3185, 1318, 3, 17], [3290, 1314, 4, 19],
  [2381, 1386, 4, 9], [2422, 1390, 3, 12], [2490, 1390, 11, 5], [2566, 1390, 4, 16], [2635, 1390, 12, 5], [2709, 1390, 4, 8], [2713, 1390, 4, 8], [2779, 1390, 12, 5], [2855, 1390, 4, 16], [2925, 1390, 12, 5], [3000, 1390, 4, 14], [3062, 1390, 15, 5], [3176, 1390, 12, 5],
  [3000, 1452, 4, 12], [3071, 1460, 7, 7], [3182, 1462, 6, 5],
];

const spans = colX.slice(1).map((x, i) => {
  const w = x - colX[i];
  return { at: (x + colX[i]) / 2, t: w > 60 ? '٤٫٠٠' : w > 36 ? '٢٫٢٠' : '١٫٨٠' };
});
const vSpans = rowY.slice(1).map((y, i) => ({ at: (y + rowY[i]) / 2, t: y - rowY[i] > 60 ? '٤٫٠٠' : '٢٫٢٠' }));

const Tag = ({ x, y, t }: { x: number; y: number; t: string }) => (
  <g>
    <circle cx={x} cy={y} r={9} fill="none" stroke="#d79b10" strokeWidth={1.4} />
    <text x={x} y={y + 4} fontSize={11}>{t}</text>
  </g>
);
const VText = ({ x, y, t }: { x: number; y: number; t: string }) => (
  <text fontSize={9} transform={`translate(${x} ${y}) rotate(-90)`}>{t}</text>
);

const Plan = () => (
  <Svg width={1130} height={900} viewBox="2260 725 1130 900" fill="none" role="img" aria-label="Column axes plan">
    <g stroke="#35060f" strokeWidth={1.3} strokeDasharray="22 2 5 2">
      {colRuns.map((runs, i) => runs.map(([a, b]) => <path key={`${i}-${a}`} d={`M${colX[i]} ${a}V${b}`} />))}
      {rowRuns.map((runs, i) => runs.map(([a, b]) => <path key={`${i}-${a}`} d={`M${a} ${rowY[i]}H${b}`} />))}
      <path d="M2916 1036V1059M3171 1040H3189M3197 1040H3215" />
    </g>
    <path stroke="#e9e9ee" strokeWidth={1.3} d="M2380 771H3294M2380 785H3294M2380 767V801M3294 767V801M2380 1561H3294M2380 1576H3294M2380 1547V1581M3294 1547V1581M2305 842V1507M2320 842V1507M2301 842H2335M2301 1507H2335M3327 842V1507M3341 842V1507M3312 842H3347M3312 1507H3347" />
    <g stroke="#e800b0" strokeWidth={1.3}>
      {posts.map(([x, y, w, h]) => <rect key={`${x}-${y}`} x={x} y={y} width={w} height={h} />)}
      {colX.slice(4, 12).map((x) => <path key={x} d={`M${x - 5} 842h3v2h6v-2h3v7h-12z`} />)}
      <path d="M2566 849V844H2570V842H2573V849zM3214 842H3217V844H3221V849H3214zM3267 844H3270" />
      {colX.slice(2, 9).map((x) => <path key={x} d={`M${x - 5} 1502h11v5h-3v-2h-5v2h-3z`} />)}
      <path d="M2423 1502H2429V1507H2426V1505H2423zM2998 1502H3004V1505H3001V1507H2998z" />
    </g>
    <path stroke="#6e4348" strokeWidth={1.3} d="M2709 1027H2717V1034H2709zM2713 1027V1034M2709 1316H2717V1324H2709zM2713 1316V1324" />
    <g fill="#ffb90a" textAnchor="middle" fontFamily="'DejaVu Sans', sans-serif" fontWeight={700}>
      {colX.map((x, i) => <g key={x}><Tag x={x + 1} y={740} t={colNames[i]} /><Tag x={x + 1} y={1607} t={colNames[i]} /></g>)}
      {rowY.map((y, i) => <g key={y}><Tag x={2274} y={y} t={rowNames[i]} /><Tag x={3373} y={y} t={rowNames[i]} /></g>)}
      {spans.map((s) => <g key={s.at} fontSize={9}><text x={s.at} y={785}>{s.t}</text><text x={s.at} y={1561}>{s.t}</text></g>)}
      {vSpans.map((s) => <g key={s.at}><VText x={2320} y={s.at} t={s.t} /><VText x={3327} y={s.at} t={s.t} /></g>)}
      <g fontSize={9}>
        <text x={2374} y={783}>٫٢٠</text><text x={3300} y={783}>٫٢٠</text><text x={2374} y={1561}>٫٢٠</text><text x={3300} y={1561}>٫٢٠</text>
        <text x={2837} y={771}>٥٠٫٦٠</text><text x={2837} y={1576}>٥٠٫٦٠</text>
      </g>
      <VText x={2304} y={1174} t="٣٦٫٨٠" /><VText x={3341} y={1174} t="٣٦٫٨٠" />
      {[2318, 3325].map((x) => <g key={x}><VText x={x} y={836} t="٫٢٠" /><VText x={x} y={1514} t="٫٢٠" /></g>)}
    </g>
  </Svg>
);

const ViewCube = () => (
  <Svg width={300} height={300} viewBox="0 0 300 300" role="img" aria-label="ViewCube">
    <circle cx="150" cy="150" r="112" fill="none" stroke="#454950" strokeWidth="29" />
    <path fill="#a9adb0" stroke="#6d7072" strokeWidth="2" d="M95 95H205V204H95z" />
    <path fill="#a0a3aa" d="M116 116H184V184H116z" />
    <g fill="#b0b3b7" fontFamily="'Liberation Sans', sans-serif" fontWeight="700" fontSize="46" textAnchor="middle">
      <text x="150" y="49">N</text><text x="150" y="286">S</text><text x="32" y="167">W</text><text x="269" y="167">E</text>
    </g>
    <text x="150" y="159" fill="#4f545d" fontFamily="Open Sans, sans-serif" fontWeight="700" fontSize="25" textAnchor="middle">TOP</text>
  </Svg>
);

const Wcs = styled.button`
  width: 116px;
  height: 42px;
  display: flex;
  align-items: center;
  justify-content: center;
  gap: 14px;
  border-radius: 9px;
  border: 3px solid #85878f;
  background: #9a9ca7;
  color: #3a3d44;
  font: 25px/30px 'Liberation Sans', sans-serif;
`;
const NavBar = styled.div`
  width: 74px;
  height: 509px;
  padding: 4px 5px;
  display: flex;
  flex-direction: column;
  align-items: center;
  justify-content: space-between;
  background: #595e63;
  border: 1px solid #6b7075;
  border-radius: 4px;
`;
const Corner = styled.button`
  align-self: flex-end;
`;
const navInk = '#3f444d';

const Navigation = () => (
  <NavBar>
    <Corner aria-label="Close navigation bar"><Pic w={20}><circle cx="10" cy="10" r="9" fill="#464b52" /><path stroke="#6f747a" strokeWidth="2" d="M6 6L14 14M14 6L6 14" /></Pic></Corner>
    <IconButton aria-label="Steering wheel"><Pic w={58}><path stroke={navInk} strokeWidth="3" d="M29 2H50Q56 2 56 8V29A27 27 0 1 1 29 2zM12 49L20 41M46 49L38 41" /><circle cx="29" cy="29" r="14" stroke={navInk} strokeWidth="3" /></Pic></IconButton>
    <Caret color={navInk} />
    <IconButton aria-label="Pan"><Pic w={60}><path fill="#4f545b" stroke={navInk} strokeWidth="2.5" d="M2 32Q8 27 14 34L19 38L15 12Q16 4 22 8L28 28L29 6Q33 -1 38 6L37 27L44 7Q50 3 52 9L46 32L54 18Q60 14 59 22L46 54Q44 58 38 58H28Q20 56 14 46z" /></Pic></IconButton>
    <IconButton aria-label="Zoom extents"><Pic w={60}><path stroke={navInk} strokeWidth="3.5" d="M4 4L30 28M38 4L4 36M2 12V2H12M30 2H40V12M2 28V38H12" /><circle cx="40" cy="37" r="12" stroke={navInk} strokeWidth="4" /><path stroke={navInk} strokeWidth="7" d="M49 46L59 56" /></Pic></IconButton>
    <Caret color={navInk} />
    <IconButton aria-label="Orbit"><Pic w={60}><ellipse cx="30" cy="32" rx="27" ry="9" stroke={navInk} strokeWidth="3" /><path fill="#595e63" stroke={navInk} strokeWidth="3" d="M30 2L40 13H36V56H24V13H20z" /><path fill={navInk} d="M8 40L20 31V48z" /></Pic></IconButton>
    <Caret color={navInk} />
    <IconButton aria-label="ShowMotion"><Pic w={60}><path stroke={navInk} strokeWidth="3" d="M2 2H18V18H2zM22 2H38V18H22zM42 2H58V18H42zM2 24H43V58H2z" /><path fill={navInk} d="M14 31L32 41L14 51z" /></Pic></IconButton>
    <Corner aria-label="Navigation options"><Pic w={20}><circle cx="10" cy="10" r="9" fill="#464b52" /><path fill="#6f747a" d="M5 6H15V8H5zM5 10H15L10 15z" /></Pic></Corner>
  </NavBar>
);

const CommandBar = styled.form`
  position: absolute;
  left: 563px;
  right: 563px;
  bottom: 0;
  height: 68px;
  display: flex;
  align-items: center;
  background: linear-gradient(90deg, #2b2d3a 140px, #212830 140px);
  border-radius: 8px 0 0 0;
`;
const CommandTools = styled.div`
  width: 138px;
  flex: none;
  padding-left: 9px;
  display: flex;
  align-items: center;
  gap: 13px;
`;
const CommandField = styled.div`
  flex: 1;
  height: 64px;
  padding: 0 10px;
  display: flex;
  align-items: center;
  gap: 7px;
  background: #bcbdbf;
  border-radius: 5px;
`;
const CommandInput = styled.input`
  flex: 1;
  margin-left: 7px;
  font: italic 30px/40px 'DejaVu Sans Mono', monospace;
  outline: 0;
  &::placeholder { color: #6b6d70; opacity: 1; }
`;

const Drawing = () => (
  <Canvas>
    <ViewLabel>[−][Top][2D Wireframe]</ViewLabel>
    <Float $r={22} $t={20}>
      <WindowButtons $gap={24}>
        <IconButton aria-label="Minimize view"><Pic w={25} h={20}><path fill={W} d="M0 14H25V19H0z" /></Pic></IconButton>
        <IconButton aria-label="Restore view"><Pic w={25} h={20}><path stroke={W} strokeWidth="4" d="M7 7V2H23V14H18M2 8H17V18H2z" /></Pic></IconButton>
        <IconButton aria-label="Close view"><Pic w={22} h={20}><path stroke={W} strokeWidth="5" d="M1 1L21 19M21 1L1 19" /></Pic></IconButton>
      </WindowButtons>
    </Float>
    <Float $r={448} $t={289}><Plan /></Float>
    <Float $r={23} $t={76}><ViewCube /></Float>
    <Float $r={115} $t={410}><Wcs>WCS<Caret big color="#b9c0c6" /></Wcs></Float>
    <Float $r={3} $t={502}><Navigation /></Float>
    <Float $r={0} $b={162}>
      <Pic w={123} h={192}><path stroke="#d9dadd" strokeWidth="2" d="M0 97H90M104 97H123M97 0V90M97 104V192M90 90H104V104H90z" /></Pic>
    </Float>
    <Float $l={20} $b={26}>
      <Svg width={180} height={190} viewBox="0 0 180 190" fill="none">
        <path stroke="#f0f0f0" strokeWidth="2" d="M14 50V175H140M3 163H27V187H3z" />
        <g fill="#f0f0f0" fontFamily="Lato, sans-serif" fontWeight="300" fontSize="44" textAnchor="middle">
          <text x="31" y="46">Y</text><text x="159" y="174">X</text>
        </g>
      </Svg>
    </Float>
    <CommandBar>
      <CommandTools>
        <Pic w={12} h={52}><path fill="#b5b6bb" d="M0 0h4v5H0zM8 0h4v5H8zM0 9h4v5H0zM8 9h4v5H8zM0 18h4v5H0zM8 18h4v5H8zM0 27h4v5H0zM8 27h4v5H8zM0 36h4v5H0zM8 36h4v5H8zM0 46h4v5H0zM8 46h4v5H8z" /></Pic>
        <IconButton type="button" aria-label="Close command line"><Pic w={24}><path stroke="#b5b6bb" strokeWidth="5" d="M1 1L23 23M23 1L1 23" /></Pic></IconButton>
        <IconButton type="button" $pull={14} aria-label="Customize"><Pic w={40}><path stroke="#b5b6bb" strokeWidth="7" strokeLinecap="round" d="M5 35L24 16" /><path stroke="#b5b6bb" strokeWidth="5" d="M28 1A9 9 0 1 0 38 14" /></Pic></IconButton>
      </CommandTools>
      <CommandField>
        <Pic w={40} h={30}><path fill="#53565b" d="M0 0H40V30H0z" /><path fill="#c6c7c9" d="M3 8H37V27H3z" /><path stroke="#53565b" strokeWidth="3" d="M6 11L13 16L6 21M15 22H25" /></Pic>
        <Caret big color="#4d5055" />
        <CommandInput aria-label="Command" placeholder="Type a command" />
        <Caret big up color="#4d5055" />
      </CommandField>
    </CommandBar>
  </Canvas>
);

/* ---------- layout tabs and status bar ---------- */

const Bottom = styled.div`
  height: 114px;
  border-top: 3px solid #45484d;
`;
const LayoutTabs = styled.nav`
  height: 51px;
  display: flex;
  align-items: flex-start;
  padding-left: 18px;
`;
const LayoutTab = styled.button<{ $on?: boolean }>`
  position: relative;
  z-index: 0;
  width: 156px;
  height: 43px;
  font-weight: ${(p) => (p.$on ? 700 : 400)};
  color: ${(p) => (p.$on ? '#ffffff' : '#bcbfc5')};
  & + & { margin-left: 2px; }
  &::before {
    content: '';
    position: absolute;
    z-index: -1;
    inset: 0;
    border-radius: 0 0 14px 14px;
    transform-origin: top;
    transform: perspective(200px) rotateX(-14deg);
    background: ${(p) => (p.$on ? D : '#303745')};
  }
`;
const StatusBar = styled.div`
  height: 60px;
  display: flex;
  justify-content: flex-end;
`;
const StatusGroup = styled.div<{ $gap?: number }>`
  display: flex;
  margin-left: ${(p) => p.$gap ?? 6}px;
  background: ${D};
`;
const StatusItem = styled.button<{ $w?: number; $on?: boolean }>`
  width: ${(p) => p.$w ?? 60}px;
  height: 60px;
  display: flex;
  align-items: center;
  justify-content: center;
  gap: 10px;
  background: ${(p) => (p.$on ? '#5b8fc4' : 'none')};
  background-clip: padding-box;
  border: ${(p) => (p.$on ? `2px solid ${D}` : '0')};
`;
const Drop = ({ name }: { name: string }) => <StatusItem $w={40} aria-label={`${name} options`}><Caret big /></StatusItem>;

const Compass = ({ c = G }: { c?: string }) => <path fill={c} d="M18 0L24 22Q27 30 36 40L18 32L0 40Q9 30 12 22z" />;

const Status = () => (
  <StatusBar>
    <StatusGroup><StatusItem $w={120}>MODEL</StatusItem></StatusGroup>
    <StatusGroup>
      <StatusItem aria-label="Grid"><Pic w={38}><path stroke={G} strokeWidth="3" d="M0 9H38M0 19H38M0 29H38M9 0V38M19 0V38M29 0V38" /></Pic></StatusItem>
      <StatusItem aria-label="Snap"><Pic w={32}><g fill={G}>{[0, 13, 26].map((y) => [0, 13, 26].map((x) => <rect key={x + y * 40} x={x} y={y} width="5" height="5" />))}</g></Pic></StatusItem>
      <Drop name="Snap" />
    </StatusGroup>
    <StatusGroup>
      <StatusItem $on aria-label="Ortho"><Pic><path stroke={W} strokeWidth="3" d="M2 0V38H40M2 26H14V38" /></Pic></StatusItem>
      <StatusItem aria-label="Polar"><Pic><circle cx="17" cy="21" r="15" stroke={G} strokeWidth="3" /><path stroke={G} strokeWidth="3" d="M34 3L17 21H40" /></Pic></StatusItem>
      <Drop name="Polar" />
      <StatusItem aria-label="Isometric"><Pic><path stroke={R} strokeWidth="3" d="M3 4L34 35" /><path stroke={GN} strokeWidth="3" d="M19 0V38" /><path fill={D} stroke={W} strokeWidth="2" d="M16 16H22V22H16z" /></Pic></StatusItem>
      <Drop name="Isometric" />
    </StatusGroup>
    <StatusGroup $gap={2}>
      <StatusItem $on aria-label="Object snap tracking"><Pic><path stroke={W} strokeWidth="3" d="M30 6L3 34H40" /><path fill={W} d="M12 16H20V23H12z" /></Pic></StatusItem>
      <StatusItem $on aria-label="Object snap"><Pic><path stroke={W} strokeWidth="3" d="M1 2H11V12H1zM16 7H39V39H6V16" /></Pic></StatusItem>
      <Drop name="Object snap" />
    </StatusGroup>
    <StatusGroup>
      <StatusItem $on aria-label="Annotation visibility"><Pic><Compass c={W} /><circle cx="33" cy="10" r="6" stroke={W} strokeWidth="3" /></Pic></StatusItem>
      <StatusItem aria-label="AutoScale"><Pic><Compass /><path fill={G} d="M34 1L26 11H31L29 19L40 9H34z" stroke={D} /></Pic></StatusItem>
      <StatusItem aria-label="Annotation"><Pic w={36} h={40}><Compass /></Pic></StatusItem>
      <StatusItem $w={84}>1:1<Caret big /></StatusItem>
    </StatusGroup>
    <StatusGroup>
      <StatusItem aria-label="Workspace">
        <Pic w={38}><circle cx="19" cy="19" r="11" stroke={G} strokeWidth="8" />{Array.from({ length: 8 }, (_, i) => <rect key={i} x="15" y="0" width="8" height="7" fill={G} transform={`rotate(${i * 45} 19 19)`} />)}</Pic>
      </StatusItem>
      <Drop name="Workspace" />
    </StatusGroup>
    <StatusGroup $gap={2}><StatusItem aria-label="Annotation monitor"><Pic><path stroke={G} strokeWidth="4" d="M0 20H40M20 0V40" /></Pic></StatusItem></StatusGroup>
    <StatusGroup><StatusItem aria-label="Isolate objects"><Pic><path stroke={G} strokeWidth="3" d="M2 2H17V16H2zM17 25L25 39H8z" /><circle cx="31" cy="15" r="8" stroke={G} strokeWidth="3" /></Pic></StatusItem></StatusGroup>
    <StatusGroup $gap={8}>
      <StatusItem $w={76} aria-label="Hardware acceleration">
        <Pic w={60}>
          <path fill="#1f60ab" d="M0 0H34L48 14V40L38 50L24 34H0z" /><path fill="#84a9d4" d="M34 0L48 14H34z" />
          <path stroke={W} strokeWidth="3" d="M12 0V34M0 13H34" /><circle cx="12" cy="13" r="5" stroke={W} strokeWidth="2.5" />
          <path fill="#fdb813" d="M0 34H24L20 42L26 52H0z" /><path stroke="#1fa152" strokeWidth="8" d="M24 42L36 54L58 33" />
        </Pic>
      </StatusItem>
      <StatusItem $w={68} aria-label="Trusted drawing"><Pic><path fill={G} d="M0 0H38V30H0z" /><path stroke="#555" strokeWidth="2" d="M2 22L12 8L24 20L36 10" /><Sq x={13} y={8} /><path fill="#e8ad68" stroke={D} d="M29 17L41 41H17z" /><path stroke={W} strokeWidth="3" d="M29 25V33M29 35V38" /></Pic></StatusItem>
    </StatusGroup>
    <StatusGroup $gap={8}>
      <StatusItem aria-label="Clean screen"><Pic><path stroke={G} strokeWidth="3" d="M2 6H38V34H2zM8 28L14 22M26 18L32 12" /><path fill={G} d="M6 20V30H16zM34 20V10H24z" /></Pic></StatusItem>
      <StatusItem aria-label="Customization"><Pic><path stroke={G} strokeWidth="5" d="M0 5H40M0 20H40M0 35H40" /></Pic></StatusItem>
    </StatusGroup>
  </StatusBar>
);

/* ---------- taskbar ---------- */

const Taskbar = styled.footer`
  height: 120px;
  display: grid;
  grid-template-columns: 1fr auto 1fr;
  align-items: center;
  background: linear-gradient(90deg, #22211f, #26221f 60%, #22211f);
`;
const Apps = styled.div`
  grid-column: 2;
  display: flex;
  padding: 2px 0 0 2px;
`;
const AppButton = styled.button<{ $on?: boolean }>`
  position: relative;
  width: 100px;
  height: 100px;
  margin: 0 5px;
  display: grid;
  place-items: center;
  border-radius: 9px;
  background: ${(p) => (p.$on ? '#323130' : 'none')};
`;
const Running = styled.span<{ $on?: boolean }>`
  position: absolute;
  bottom: 3px;
  left: calc(50% - ${(p) => (p.$on ? 20 : 7)}px);
  width: ${(p) => (p.$on ? 40 : 14)}px;
  height: 8px;
  border-radius: 4px;
  background: ${(p) => (p.$on ? '#1593e3' : '#97989c')};
`;
const Tray = styled.div`
  display: flex;
  align-items: center;
  justify-content: flex-end;
  gap: 42px;
  padding-right: 46px;
`;
const TrayGroup = styled.div`
  display: flex;
  gap: 20px;
`;
const Clock = styled.time`
  text-align: right;
  line-height: 39px;
`;

const apps: { name: string; art: React.ReactNode; state?: 'open' | 'active' }[] = [
  { name: 'Start', art: <><path fill="#76c9fb" d="M1 1H29V29H1z" /><path fill="#3fbafa" d="M31 1H59V29H31zM1 31H29V59H1z" /><path fill="#2cb1f8" d="M31 31H59V59H31z" /></> },
  { name: 'Search', art: <><path stroke="#dfe1e3" strokeWidth="6" strokeLinecap="round" d="M5 54L17 40" /><circle cx="30" cy="24" r="21" fill="#3c3c3c" stroke="#f1f1f1" strokeWidth="4" /></> },
  { name: 'Task View', art: <><path fill="#5c5c5c" d="M0 17H45V56H0z" /><path fill="#f1f1f1" d="M15 1H60V42H15z" /><path fill="#bdbdbb" d="M15 17H45V42H15z" /></> },
  { name: 'Widgets', art: <><path fill="#1b5fae" d="M0 1H60V56H0z" /><rect x="5" y="6" width="22" height="45" rx="4" fill="#f3f4f6" /><rect x="32" y="6" width="23" height="25" rx="3" fill="#5abcf5" /><rect x="32" y="32" width="23" height="19" rx="3" fill="#1a86df" /></> },
  { name: 'Chat', art: <><path fill="#6f6ad4" d="M30 0A28 28 0 1 1 16 52Q10 56 2 56L4 38A28 28 0 0 1 30 0z" /><rect x="14" y="17" width="24" height="23" rx="4" fill={W} /><path fill={W} d="M41 26L47 20V38L41 33z" /></> },
  { name: 'AutoCAD', state: 'active', art: <><path fill="#fbf6e9" d="M0 -1H60V60H0z" /><path fill="#bb2226" d="M24 6H37L51 50H40L37 40Q30 36 25 41L22 50H10z" /><path fill="#fbf6e9" d="M30 17L35 33L26 34z" /><path fill="#dd7a62" d="M10 50L16 36Q28 30 37 40L40 50H36L33 42Q26 39 21 44L19 50z" opacity=".7" /></> },
  { name: 'Mail', art: <><path fill="#1e5fb0" d="M0 17L30 -1L60 17V30H0z" /><path fill="#f5f5f5" d="M5 17H55L30 36z" /><path fill="#1592e6" d="M0 17L60 56H0z" /><path fill="#36b8fa" d="M60 17L30 36L60 56z" /></> },
  { name: 'File Explorer', state: 'open', art: <><path fill="#dba40f" d="M0 4Q0 2 3 2H18L24 9V16H0z" /><path fill="#ffcb45" d="M0 17L22 12L26 8H57Q60 8 60 11V52Q60 55 57 55H0z" /><path fill="#1b67b3" d="M10 55V42Q10 38 15 38H45Q50 38 50 42V55z" /><path stroke="#124b87" strokeWidth="3" d="M18 46H42" /></> },
  { name: 'Chrome', state: 'open', art: <><circle cx="30" cy="28" r="28" fill="#ffcd46" /><path fill="#e4493f" d="M5 16A28 28 0 0 1 55 16H30L18 35z" /><path fill="#2ca25b" d="M5 16L18 35L36 40L28 56A28 28 0 0 1 5 16z" /><circle cx="30" cy="28" r="13" fill="#f2f6fc" /><circle cx="30" cy="28" r="10.500" fill="#3b8cf0" /></> },
];

const WindowsBar = () => (
  <Taskbar>
    <Apps>
      {apps.map((a) => (
        <AppButton key={a.name} $on={a.state === 'active'} aria-label={a.name}>
          <Pic w={60}>{a.art}</Pic>
          {a.state && <Running $on={a.state === 'active'} />}
        </AppButton>
      ))}
    </Apps>
    <Tray>
      <Pic w={32} h={18}><path stroke={W} strokeWidth="2.500" d="M1 17L16 2L31 17" /></Pic>
      <Pic w={40} h={30}><circle cx="21" cy="13" r="12" fill="#9d9c9a" /><circle cx="11" cy="18" r="11" fill="#cfcfcf" /><path fill={W} d="M2 24L22 14Q38 10 40 22Q39 29 33 29H9Q4 29 2 24z" /></Pic>
      <Pic><path stroke={W} strokeWidth="3" d="M12 39L14 26L30 2Q36 -2 39 4T36 14L20 36zM13 16L22 6H28M6 28Q0 30 1 35T8 39M35 20Q43 26 34 28H28" /></Pic>
      <span>ENG</span>
      <TrayGroup>
        <Pic><g stroke={W} strokeWidth="3"><path d="M1 16A27 27 0 0 1 39 16M7 22A19 19 0 0 1 33 22M13 28A10 10 0 0 1 27 28" /></g><circle cx="20" cy="31" r="3.500" fill={W} /></Pic>
        <Pic><path stroke={W} strokeWidth="3" d="M2 14H8L17 7V33L8 26H2zM22 14Q26 20 22 26M27 9Q34 20 27 31M31 4Q44 20 31 36" /></Pic>
        <Pic><rect x="1.500" y="9" width="33" height="23" rx="5" stroke={W} strokeWidth="3" /><path fill={W} d="M6 14H9V27H6zM36 16H40V25H36z" /></Pic>
      </TrayGroup>
      <Clock>2:47 PM<br />10/25/2021</Clock>
    </Tray>
  </Taskbar>
);

const Watermark = styled.div`
  position: absolute;
  left: 50%;
  bottom: 46px;
  transform: translateX(-50%);
  display: flex;
  flex-direction: column;
  align-items: center;
  color: rgba(152, 153, 158, 0.55);
  pointer-events: none;
  white-space: nowrap;
`;
const WatermarkLogo = styled.span`
  font: 700 144px/132px 'DejaVu Sans Condensed', 'DejaVu Sans', sans-serif;
`;
const WatermarkUrl = styled.span`
  font: 600 74px/80px ${UI};
`;

export default function App() {
  return (
    <Page>
      <Global />
      <TopBar />
      <RibbonTabs>
        {tabs.map((t, i) => <RibbonTab key={t} $on={i === 0}>{t}</RibbonTab>)}
        <Collapse aria-label="Minimize ribbon">
          <Pic w={37} h={20}><path fill="#f2f2f2" d="M0 0H37V20H0z" /><path fill="#555" d="M12 14H24L18 6z" /></Pic>
          <Caret />
        </Collapse>
      </RibbonTabs>
      <RibbonBar />
      <FileTabs>
        <FileTab $w={340}>Start</FileTab>
        <FileTab $w={362} $on>
          CIVIL SCHOOL 13*
          <Pic w={24}><path stroke="#a7abb2" strokeWidth="4" d="M1 1L23 23M23 1L1 23" /></Pic>
        </FileTab>
        <AddTab aria-label="New tab"><Plus /></AddTab>
      </FileTabs>
      <Rule />
      <Drawing />
      <Bottom>
        <LayoutTabs>
          <LayoutTab $on>Model</LayoutTab>
          <LayoutTab>Layout1</LayoutTab>
          <LayoutTab>Layout2</LayoutTab>
          <AddTab $down aria-label="New layout"><Plus /></AddTab>
        </LayoutTabs>
        <Status />
      </Bottom>
      <WindowsBar />
      <Watermark>
        <WatermarkLogo lang="ar">مستقل</WatermarkLogo>
        <WatermarkUrl>mostaql.com</WatermarkUrl>
      </Watermark>
    </Page>
  );
}
